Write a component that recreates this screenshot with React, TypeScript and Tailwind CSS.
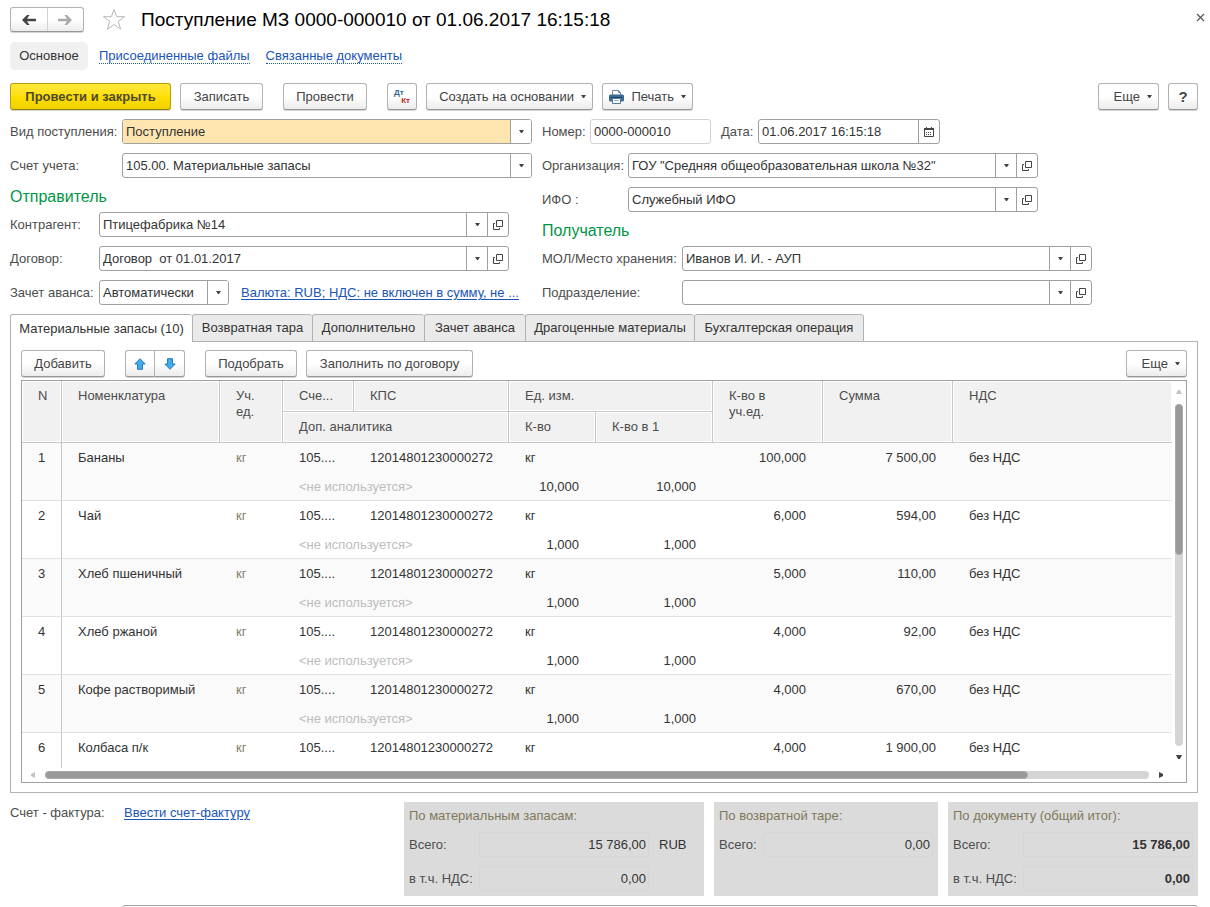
import { useState, type ReactNode } from "react"
import clsx from "clsx"

const BTN = "flex h-[27px] shrink-0 cursor-pointer items-center rounded-[3px] border border-[#b2b2b2] border-b-[#959595] bg-linear-to-b from-white from-50% to-[#ececec] text-[#444] shadow-[0_1px_0_#d4d4d4]"
const FRAME = "flex h-[25px] shrink-0 overflow-hidden rounded-[3px] border border-[#a0a0a0] bg-white text-[#333]"
const LINK = "text-[#1a55b8]"

//the last row is only half in view, so its second line is not filled
const items = [
    { name: "Бананы", qty: "10,000", total: "100,000", sum: "7 500,00" },
    { name: "Чай", qty: "1,000", total: "6,000", sum: "594,00" },
    { name: "Хлеб пшеничный", qty: "1,000", total: "5,000", sum: "110,00" },
    { name: "Хлеб ржаной", qty: "1,000", total: "4,000", sum: "92,00" },
    { name: "Кофе растворимый", qty: "1,000", total: "4,000", sum: "670,00" },
    { name: "Колбаса п/к", qty: "", total: "4,000", sum: "1 900,00" },
]

const tabs = [
    { title: "Материальные запасы (10)", width: "w-[182px]" },
    { title: "Возвратная тара", width: "w-[120px]" },
    { title: "Дополнительно", width: "w-[112px]" },
    { title: "Зачет аванса", width: "w-[101px]" },
    { title: "Драгоценные материалы", width: "w-[169px]" },
    { title: "Бухгалтерская операция", width: "w-[170px]" },
]

function Caret() {
    return <svg width="5" height="3" viewBox="0 0 5 3" className="shrink-0" aria-hidden="true">
        <path d="M0 0h5L3 3H2z" fill="#444" />
    </svg>
}

function OpenIcon() {
    return <svg width="10" height="10" viewBox="0 0 10 10" fill="none" stroke="#444" aria-hidden="true">
        <path d="M3.5.5h6v6h-6z" />
        <path d="M2 3.5H.5v6h6V8" />
    </svg>
}

function MoveArrow({ down }: { down?: boolean }) {
    return <svg width="12" height="12" viewBox="0 0 12 12" className={clsx(down && "rotate-180")} aria-hidden="true">
        <path d="M6 .7 11.2 6H8.5v5.3h-5V6H.8z" fill="#3fabea" stroke="#2a7cb4" strokeLinejoin="round" />
    </svg>
}

function NavArrow({ forward }: { forward?: boolean }) {
    return <svg width="14" height="10" viewBox="0 0 14 10" className={clsx(forward ? "rotate-180 text-[#aaa]" : "text-[#444]")} aria-hidden="true">
        <path d="M5 0h2.500L5 3.700h9v2.600H5L7.500 10H5L0 5z" fill="currentColor" />
    </svg>
}

function PrinterIcon() {
    return <svg width="15" height="14" viewBox="0 0 15 14" aria-hidden="true">
        <path d="M3.5 5V.5h6l2 2V5" fill="#fff" stroke="#6a88a6" />
        <path d="M9.5.5v2h2" fill="none" stroke="#6a88a6" />
        <rect x="0" y="4.500" width="15" height="7" rx="1.500" fill="#3b6a94" />
        <path d="M1.500 7.500h12" stroke="#1f4468" />
        <path d="M3.500 8.500h8v5h-8z" fill="#fff" stroke="#54789b" />
        <path d="M5 10.500h5" stroke="#9db3c8" />
    </svg>
}

function MoreButton() {
    return <button className={clsx(BTN, "w-[61px] justify-end gap-[7px] pr-[6px]")}>
        Еще <Caret />
    </button>
}

type ComboProps = {
    id: string
    value: string
    width: string
    open?: boolean
    active?: boolean
}

//drop-down field, optionally with the "open card" button
function Combo({ id, value, width, open, active }: ComboProps) {
    return <div className={clsx(FRAME, width)}>
        <div className="grid min-w-0 flex-1">
            <select id={id} defaultValue={value}
                className={clsx("col-start-1 row-start-1 h-full w-full cursor-pointer appearance-none pr-6 pl-[3px] outline-none", active && "bg-[#ffe6b0]")}>
                <option value={value}>{value}</option>
            </select>
            <span className="pointer-events-none col-start-1 row-start-1 flex w-[21px] items-center justify-center justify-self-end border-l border-[#a0a0a0] bg-white">
                <Caret />
            </span>
        </div>
        {open && (
            <button aria-label="Открыть" className="flex w-[21px] cursor-pointer items-center justify-center border-l border-[#a0a0a0]">
                <OpenIcon />
            </button>
        )}
    </div>
}

function Field({ id, label, labelWidth, children }: { id: string, label: string, labelWidth: string, children: ReactNode }) {
    return <div className="flex h-[34px] items-start">
        <label htmlFor={id} className={clsx("shrink-0 leading-[25px] whitespace-nowrap text-[#4d4d4d]", labelWidth)}>{label}</label>
        {children}
    </div>
}

function Head({ children, last, ...rest }: { children: ReactNode, last?: boolean, rowSpan?: number, colSpan?: number }) {
    return <th {...rest} className={clsx("border-b border-[#c8c8c8] bg-[#f1f1f1] pt-[7px] pl-4 text-left align-top font-normal text-[#4d4d4d] shadow-[inset_0_0_0_1px_#fff]", !last && "border-r")}>
        {children}
    </th>
}

function GoodsTable() {
    return <table className="w-full table-fixed border-separate border-spacing-0 text-[#333]">
        <colgroup>
            <col className="w-[40px]" />
            <col className="w-[158px]" />
            <col className="w-[63px]" />
            <col className="w-[71px]" />
            <col className="w-[155px]" />
            <col className="w-[87px]" />
            <col className="w-[117px]" />
            <col className="w-[110px]" />
            <col className="w-[130px]" />
            <col />
        </colgroup>
        <thead>
            <tr className="h-[31px]">
                <Head rowSpan={2}>N</Head>
                <Head rowSpan={2}>Номенклатура</Head>
                <Head rowSpan={2}>Уч.<br />ед.</Head>
                <Head>Сче...</Head>
                <Head>КПС</Head>
                <Head colSpan={2}>Ед. изм.</Head>
                <Head rowSpan={2}>К-во в<br />уч.ед.</Head>
                <Head rowSpan={2}>Сумма</Head>
                <Head rowSpan={2} last>НДС</Head>
            </tr>
            <tr className="h-[31px]">
                <Head colSpan={2}>Доп. аналитика</Head>
                <Head>К-во</Head>
                <Head>К-во в 1</Head>
            </tr>
        </thead>
        {items.map((item, i) => {
            const span = item.qty ? 2 : 1
            return <tbody key={item.name} className={clsx("align-top [&_td]:pt-[7px]", i % 2 === 0 ? "bg-[#fafafa]" : "bg-white")}>
                <tr className={item.qty ? "h-[29px]" : "h-[58px] bg-white"}>
                    <td rowSpan={span} className="border-r border-b border-r-[#c8c8c8] border-b-[#e2e2e2] pl-4">{i + 1}</td>
                    <td rowSpan={span} className="border-b border-[#e2e2e2] pl-4">{item.name}</td>
                    <td rowSpan={span} className="border-b border-[#e2e2e2] pl-4 text-[#80806a]">кг</td>
                    <td className="pl-4">105....</td>
                    <td className="pl-4">12014801230000272</td>
                    <td colSpan={2} className="pl-4">кг</td>
                    <td rowSpan={span} className="border-b border-[#e2e2e2] pr-[17px] text-right">{item.total}</td>
                    <td rowSpan={span} className="border-b border-[#e2e2e2] pr-[17px] text-right">{item.sum}</td>
                    <td rowSpan={span} className="border-b border-[#e2e2e2] pl-4">без НДС</td>
                </tr>
                {item.qty && (
                    <tr className="h-[29px]">
                        <td colSpan={2} className="border-b border-[#e2e2e2] pl-4 text-[#bdbdbd]">&lt;не используется&gt;</td>
                        <td className="border-b border-[#e2e2e2] pr-[17px] text-right">{item.qty}</td>
                        <td className="border-b border-[#e2e2e2] pr-[17px] text-right">{item.qty}</td>
                    </tr>
                )}
            </tbody>
        })}
    </table>
}

function VerticalScroll() {
    return <div className="flex w-[14px] shrink-0 flex-col items-center py-[9px]" aria-hidden="true">
        <svg width="6" height="4" viewBox="0 0 6 4"><path d="M0 4h6L4 0H2z" fill="#c4c4c4" /></svg>
        <div className="mt-[10px] mb-[9px] w-2 flex-1 rounded-full bg-[#d5d5d5]">
            <div className="h-[151px] rounded-full border border-[#aaa] bg-[#999]" />
        </div>
        <svg width="6" height="4" viewBox="0 0 6 4"><path d="M0 0h6L4 4H2z" fill="#444" /></svg>
    </div>
}

function HorizontalScroll() {
    return <div className="flex h-[14px] items-center pr-[23px] pl-[9px]" aria-hidden="true">
        <svg width="4" height="6" viewBox="0 0 4 6"><path d="M4 0v6L0 4V2z" fill="#c4c4c4" /></svg>
        <div className="mr-[10px] ml-[10px] h-2 flex-1 rounded-full bg-[#d5d5d5]">
            <div className="h-2 w-[89%] rounded-full border border-[#aaa] bg-[#999]" />
        </div>
        <svg width="4" height="6" viewBox="0 0 4 6"><path d="M0 0v6l4-2V2z" fill="#444" /></svg>
    </div>
}

function TotalField({ id, label, labelWidth, value, unit, bold }: { id: string, label: string, labelWidth: string, value: string, unit?: string, bold?: boolean }) {
    return <div className="flex h-[34px] items-start leading-[25px]">
        <label htmlFor={id} className={clsx("shrink-0 text-[#4d4d4d]", labelWidth)}>{label}</label>
        <input id={id} readOnly value={value}
            className={clsx("h-[25px] w-[170px] rounded-[3px] border border-[#d6d6d6] pr-[2px] text-right text-[#333] outline-none", bold && "font-bold")} />
        {unit && <span className="ml-[10px] text-[#333]">{unit}</span>}
    </div>
}

function TotalBox({ title, width, children }: { title: string, width: string, children: ReactNode }) {
    return <section className={clsx("h-[94px] shrink-0 bg-[#dbdbdb] pt-[5px] pl-[5px]", width)}>
        <h3 className="h-[25px] leading-[17px] text-[#80785a]">{title}</h3>
        {children}
    </section>
}

export default function App() {

    const [tab, setTab] = useState(0)

    return <div className="flex h-screen flex-col overflow-hidden bg-white pt-[7px] pr-3 pl-[10px] font-['Liberation_Sans',Arial,sans-serif] text-[13px] leading-4">
        <header className="flex h-[25px] shrink-0 items-center">
            <div className="flex h-[25px] w-[74px] overflow-hidden rounded-[3px] border border-[#b2b2b2] border-b-[#959595] bg-linear-to-b from-white from-50% to-[#ececec] shadow-[0_1px_0_#d4d4d4]">
                <button aria-label="Назад" className="flex flex-1 cursor-pointer items-center justify-center"><NavArrow /></button>
                <button aria-label="Вперед" className="flex flex-1 cursor-pointer items-center justify-center border-l border-[#d0d0d0]"><NavArrow forward /></button>
            </div>
            <button aria-label="В избранное" className="ml-[18px] cursor-pointer">
                <svg width="24" height="23" viewBox="0 0 24 23" fill="none" stroke="#b4b8bc" aria-hidden="true">
                    <path d="M12 1.500l2.700 7.200h7.800l-6.200 4.700 2.300 7.800L12 16.500l-6.600 4.700 2.300-7.800L1.500 8.700h7.800z" />
                </svg>
            </button>
            <h1 className="ml-[15px] text-[19px] leading-6 text-black">Поступление МЗ 0000-000010 от 01.06.2017 16:15:18</h1>
            <button aria-label="Закрыть" className="-mr-[7px] ml-auto cursor-pointer">
                <svg width="9" height="9" viewBox="0 0 9 9" className="mb-1" stroke="#555" aria-hidden="true">
                    <path d="M1 1l7 7M8 1L1 8" strokeWidth="1.200" />
                </svg>
            </button>
        </header>

        <nav className="mt-[10px] flex h-7 shrink-0 items-center">
            <span className="flex h-7 w-[78px] items-center justify-center rounded-[5px] bg-[#f0f0f0] text-[#333]">Основное</span>
            <a href="#files" className={clsx(LINK, "ml-[11px] border-b border-dotted border-[#1a55b8] leading-[15px]")}>Присоединенные файлы</a>
            <a href="#related" className={clsx(LINK, "ml-4 border-b border-dotted border-[#1a55b8] leading-[15px]")}>Связанные документы</a>
        </nav>

        <div className="mt-[13px] flex shrink-0 items-center">
            <button className="h-[27px] w-[161px] cursor-pointer rounded-[3px] border border-[#b59f10] border-b-[#94820c] bg-linear-to-b from-[#ffe83a] via-[#ffe000] to-[#f0cf00] font-bold text-[#4d4a2a] shadow-[0_1px_0_#d4d4d4]">Провести и закрыть</button>
            <button className={clsx(BTN, "ml-[9px] w-[83px] justify-center")}>Записать</button>
            <button className={clsx(BTN, "ml-5 w-[84px] justify-center")}>Провести</button>
            <button className={clsx(BTN, "ml-5 w-[30px] flex-col justify-center px-[6px] text-[8px] leading-[8px] font-bold")}>
                <span className="self-start text-[#2f6690]">Дт</span>
                <span className="self-end text-[#c0281c]">Кт</span>
            </button>
            <button className={clsx(BTN, "ml-[9px] w-[167px] justify-end gap-[7px] pr-[6px]")}>Создать на основании <Caret /></button>
            <button className={clsx(BTN, "ml-[9px] w-[91px] justify-end gap-[7px] pr-[6px]")}><PrinterIcon /> Печать <Caret /></button>
            <div className="ml-auto flex gap-[9px]">
                <MoreButton />
                <button className={clsx(BTN, "w-[30px] justify-center text-[15px] font-bold")}>?</button>
            </div>
        </div>

        <div className="mt-[9px] flex shrink-0 gap-[10px]">
            <div className="w-[522px] shrink-0">
                <Field id="kind" label="Вид поступления:" labelWidth="w-[112px]">
                    <Combo id="kind" value="Поступление" width="w-[410px]" active />
                </Field>
                <Field id="account" label="Счет учета:" labelWidth="w-[112px]">
                    <Combo id="account" value="105.00. Материальные запасы" width="w-[410px]" />
                </Field>
                <h2 className="h-[25px] text-[16px] leading-[20px] text-[#009646]">Отправитель</h2>
                <Field id="partner" label="Контрагент:" labelWidth="w-[89px]">
                    <Combo id="partner" value="Птицефабрика №14" width="w-[410px]" open />
                </Field>
                <Field id="contract" label="Договор:" labelWidth="w-[89px]">
                    <Combo id="contract" value={"Договор\u00a0 от 01.01.2017"} width="w-[410px]" open />
                </Field>
                <Field id="advance" label="Зачет аванса:" labelWidth="w-[89px]">
                    <Combo id="advance" value="Автоматически" width="w-[130px]" />
                    <a href="#currency" className={clsx(LINK, "ml-3 leading-[25px] whitespace-nowrap underline underline-offset-2")}>Валюта: RUB; НДС: не включен в сумму, не ...</a>
                </Field>
            </div>
            <div className="min-w-0 flex-1">
                <div className="flex">
                    <Field id="number" label="Номер:" labelWidth="w-12">
                        <input id="number" defaultValue="0000-000010" className="h-[25px] w-[121px] rounded-[3px] border border-[#d2d2d2] pl-[3px] text-[#333] outline-none" />
                    </Field>
                    <div className="ml-[10px]">
                        <Field id="date" label="Дата:" labelWidth="w-[37px]">
                            <div className={clsx(FRAME, "w-[182px]")}>
                                <input id="date" defaultValue="01.06.2017 16:15:18" className="min-w-0 flex-1 pl-[3px] outline-none" />
                                <button aria-label="Выбрать дату" className="flex w-[21px] cursor-pointer items-center justify-center border-l border-[#a0a0a0]">
                                    <svg width="10" height="10" viewBox="0 0 10 10" aria-hidden="true">
                                        <path d="M.5 1.500h9v8h-9z" fill="#fff" stroke="#444" />
                                        <path d="M0 1h10v2H0zM2 0h1v1H2zM7 0h1v1H7z" fill="#444" />
                                        <path d="M2 5.500h6M2 7.500h6" stroke="#444" strokeDasharray="1 1" />
                                    </svg>
                                </button>
                            </div>
                        </Field>
                    </div>
                </div>
                <Field id="org" label="Организация:" labelWidth="w-[86px]">
                    <Combo id="org" value={'ГОУ "Средняя общеобразовательная школа №32"'} width="w-[410px]" open />
                </Field>
                <Field id="ifo" label="ИФО :" labelWidth="w-[86px]">
                    <Combo id="ifo" value="Служебный ИФО" width="w-[410px]" open />
                </Field>
                <h2 className="h-[25px] text-[16px] leading-[20px] text-[#009646]">Получатель</h2>
                <Field id="storage" label="МОЛ/Место хранения:" labelWidth="w-[140px]">
                    <Combo id="storage" value="Иванов И. И. - АУП" width="w-[410px]" open />
                </Field>
                <Field id="department" label="Подразделение:" labelWidth="w-[140px]">
                    <Combo id="department" value="" width="w-[410px]" open />
                </Field>
            </div>
        </div>

        <div role="tablist" className="flex shrink-0">
            {tabs.map((t, i) => (
                <button key={t.title} role="tab" aria-selected={i === tab} onClick={() => setTab(i)}
                    className={clsx("h-7 cursor-pointer rounded-t-[3px] border-t border-l border-[#b2b2b2] whitespace-nowrap text-[#333] last-of-type:border-r", t.width,
                        i === tab ? "bg-white" : "border-b bg-[#eaeaea]")}>
                    {t.title}
                </button>
            ))}
            <div className="flex-1 border-b border-[#b2b2b2]" />
        </div>

        <main className="shrink-0 border-x border-b border-[#b2b2b2] px-[10px] pt-2 pb-[9px]">
            <div className="flex">
                <button className={clsx(BTN, "w-[84px] justify-center")}>Добавить</button>
                <button aria-label="Переместить вверх" className={clsx(BTN, "ml-5 w-[29px] justify-center rounded-r-none border-r-0")}><MoveArrow /></button>
                <button aria-label="Переместить вниз" className={clsx(BTN, "w-[31px] justify-center rounded-l-none")}><MoveArrow down /></button>
                <button className={clsx(BTN, "ml-5 w-[92px] justify-center")}>Подобрать</button>
                <button className={clsx(BTN, "mr-auto ml-[9px] w-[167px] justify-center")}>Заполнить по договору</button>
                <MoreButton />
            </div>
            <div className="mt-[3px] border border-[#a0a0a0]">
                <div className="flex h-[387px]">
                    <div className="min-w-0 flex-1 overflow-hidden">
                        <GoodsTable />
                    </div>
                    <VerticalScroll />
                </div>
                <HorizontalScroll />
            </div>
        </main>

        <footer className="mt-[9px] flex shrink-0">
            <span className="w-[114px] leading-[22px] text-[#4d4d4d]">Счет - фактура:</span>
            <a href="#invoice" className={clsx(LINK, "mr-auto self-start leading-[22px] underline underline-offset-2")}>Ввести счет-фактуру</a>
            <div className="flex gap-[10px]">
                <TotalBox title="По материальным запасам:" width="w-[300px]">
                    <TotalField id="goods-total" label="Всего:" labelWidth="w-[70px]" value="15 786,00" unit="RUB" />
                    <TotalField id="goods-vat" label="в т.ч. НДС:" labelWidth="w-[70px]" value="0,00" />
                </TotalBox>
                <TotalBox title="По возвратной таре:" width="w-[224px]">
                    <TotalField id="tare-total" label="Всего:" labelWidth="w-[44px]" value="0,00" />
                </TotalBox>
                <TotalBox title="По документу (общий итог):" width="w-[250px]">
                    <TotalField id="doc-total" label="Всего:" labelWidth="w-[70px]" value="15 786,00" bold />
                    <TotalField id="doc-vat" label="в т.ч. НДС:" labelWidth="w-[70px]" value="0,00" bold />
                </TotalBox>
            </div>
        </footer>

        <div className="mt-[9px] flex shrink-0">
            <input aria-label="Комментарий" className="ml-[112px] h-[25px] flex-1 rounded-[3px] border border-[#a0a0a0] px-[3px]" />
        </div>
    </div>
}
